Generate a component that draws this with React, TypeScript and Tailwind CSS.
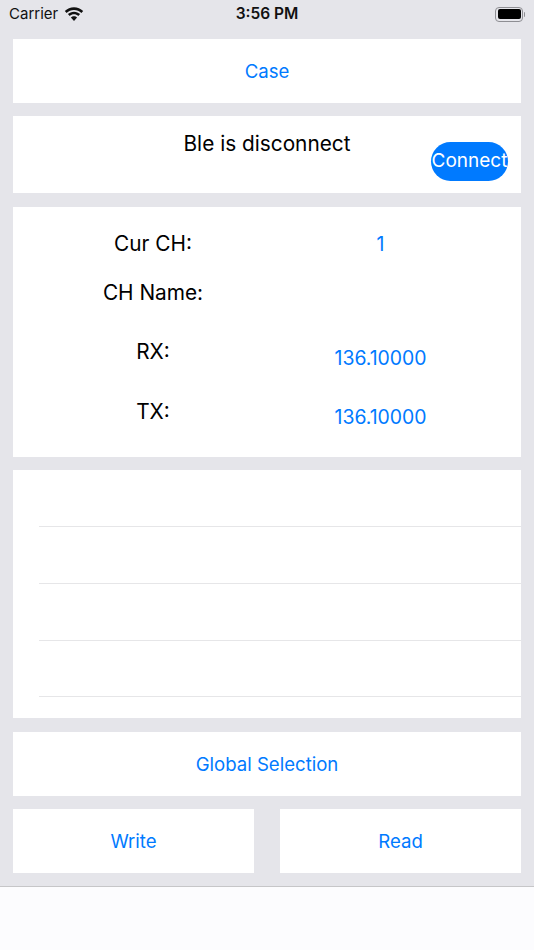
import React from 'react';

const font = { fontFamily: 'Inter, "Noto Sans", sans-serif' };

function WifiIcon() {
  return (
    <svg width="20" height="15" viewBox="0 0 20 15" className="fill-[#111]">
      <path d="M10 2.900c2.800 0 5.400 1.100 7.400 3L19.200 4C16.700 1.600 13.500.2 10 .2S3.300 1.600.8 4l1.800 1.900c2-1.900 4.600-3 7.400-3z" />
      <path d="M10 7.300c1.600 0 3.100.6 4.300 1.700l1.800-1.900C14.500 5.600 12.400 4.700 10 4.700s-4.500.9-6.100 2.400L5.700 9C6.900 7.900 8.400 7.300 10 7.300z" />
      <path d="M10 9.200c-1.200 0-2.300.5-3.100 1.200L10 13.900l3.100-3.500c-.8-.7-1.900-1.200-3.100-1.200z" />
    </svg>
  );
}

function BatteryIcon() {
  return (
    <div className="flex items-center">
      <div className="w-[28px] h-[15px] rounded-[4px] border border-[#8e8e93] p-[1.500px]">
        <div className="w-full h-full rounded-[2px] bg-black" />
      </div>
      <div className="w-[1.500px] h-[5px] rounded-r-sm bg-[#8e8e93] ml-[0.500px]" />
    </div>
  );
}

function ActionCard({ label, className }: { label: string; className: string }) {
  return (
    <button className={`bg-white flex items-center justify-center text-[#007aff] text-[18.600px] pt-[2px] ${className}`}>
      {label}
    </button>
  );
}

export default function App() {
  const rows = [57, 57, 57, 56];

  return (
    <div style={font} className="w-[534px] h-[950px] bg-[#e5e5ea] flex flex-col overflow-hidden">
      <div className="h-[39px] pl-[9px] pr-[9px] pt-[3px] grid grid-cols-3 items-start text-[#111]">
        <div className="flex items-center gap-[6px] h-[22px]">
          <span className="text-[15px]">Carrier</span>
          <WifiIcon />
        </div>
        <div className="h-[22px] flex items-center justify-center text-[15.500px] font-semibold whitespace-nowrap">3:56 PM</div>
        <div className="h-[22px] flex items-center justify-end">
          <BatteryIcon />
        </div>
      </div>

      <div className="px-[13px] flex flex-col">
        <ActionCard label="Case" className="h-[64px]" />

        <div className="mt-[13px] h-[77px] bg-white flex flex-col pt-[13px] px-[13px]">
          <div className="text-center text-[20.800px] leading-[29px] text-black">Ble is disconnect</div>
          <div className="flex justify-end -mt-[16px]">
            <button className="w-[77px] h-[39px] rounded-full bg-[#007aff] text-white text-[19px] flex items-center justify-center whitespace-nowrap">
              Connect
            </button>
          </div>
        </div>

        <div className="mt-[14px] h-[250px] bg-white grid grid-cols-2 grid-rows-[48px_50px_68px_52px] text-[20.800px] text-black pt-[13px]">
          <div className="flex items-center justify-center pl-[26px]">Cur CH:</div>
          <div className="flex items-center justify-center text-[#007aff] text-[19.400px] pr-[27px] pt-[2px]">1</div>
          <div className="flex items-center justify-center pl-[26px]">CH Name:</div>
          <div />
          <div className="flex items-center justify-center pl-[26px]">RX:</div>
          <div className="flex items-center justify-center text-[#007aff] text-[19.400px] pr-[27px] pt-[14px]">136.10000</div>
          <div className="flex items-center justify-center pl-[26px]">TX:</div>
          <div className="flex items-center justify-center text-[#007aff] text-[19.400px] pr-[27px] pt-[12px]">136.10000</div>
        </div>

        <div className="mt-[13px] h-[248px] bg-white flex flex-col">
          {rows.map((height, i) => (
            <div key={i} style={{ height }} className="ml-[26px] border-b border-[#e6e6e8]" />
          ))}
        </div>

        <ActionCard label="Global Selection" className="mt-[14px] h-[64px]" />

        <div className="mt-[13px] flex gap-[26px]">
          <ActionCard label="Write" className="flex-1 h-[64px]" />
          <ActionCard label="Read" className="flex-1 h-[64px]" />
        </div>
      </div>

      <div className="mt-[13px] flex-1 bg-[#fcfcfe] border-t border-[#c6c6c8]" />
    </div>
  );
}
